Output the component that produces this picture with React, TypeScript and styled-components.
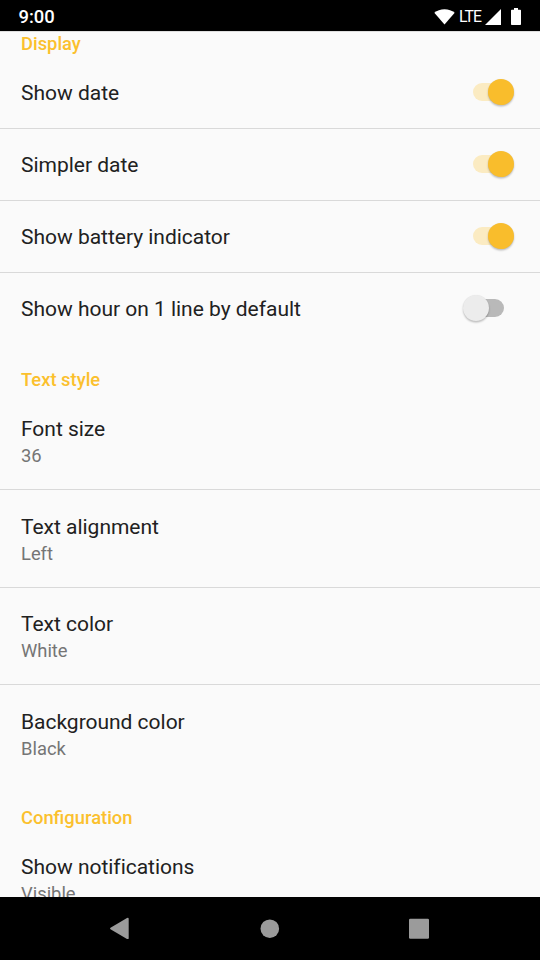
import React from "react";
import styled, { createGlobalStyle } from "styled-components";

const GlobalStyle = createGlobalStyle`
  *, *::before, *::after { box-sizing: border-box; }
  html, body { margin: 0; padding: 0; background: #000; }
  body { font-family: Roboto, sans-serif; overflow: hidden; }
`;

const Screen = styled.div`
  display: flex;
  flex-direction: column;
  width: 540px;
  height: 960px;
  background: #fafafa;
  overflow: hidden;
`;

const StatusBar = styled.header`
  flex: none;
  display: flex;
  align-items: center;
  justify-content: space-between;
  height: 31px;
  padding: 2px 19px 0 18.5px;
  background: #000;
  color: #fff;
`;

const Clock = styled.span`
  font-size: 18.4px;
  font-weight: 500;
  line-height: 22px;
`;

const StatusIcons = styled.div`
  display: flex;
  align-items: center;
  height: 20px;
  svg { display: block; fill: #fff; }
`;

const Network = styled.span`
  width: 24px;
  margin: 0 2px 0 4px;
  font-size: 15.75px;
  font-weight: 400;
  line-height: 20px;
  letter-spacing: -0.9px;
`;

const BatteryIcon = styled.svg`
  margin-left: 10px;
`;

const Viewport = styled.main`
  flex: 1;
  min-height: 0;
  overflow: hidden;
  background: #fafafa;
  border-top: 1px solid #dedede;
`;

const SettingsList = styled.div`
  margin-top: -23.5px;
`;

const Category = styled.h2`
  height: 48px;
  margin: 0;
  padding: 24px 21px 0;
  color: #fbc02d;
  font-size: 18.375px;
  font-weight: 500;
  line-height: 22px;
`;

const Row = styled.div<{ $tall?: boolean; $divided?: boolean }>`
  display: flex;
  align-items: center;
  justify-content: space-between;
  height: ${(p) => (p.$tall ? 97.5 : 72)}px;
  padding: 0 21px;
  border-bottom: 1px solid ${(p) => (p.$divided ? "#d9d9d9" : "transparent")};
`;

const Labels = styled.div`
  display: flex;
  flex-direction: column;
  padding-top: 3px;
`;

const Title = styled.span`
  color: #212121;
  font-size: 21px;
  line-height: 25px;
  letter-spacing: -0.02px;
  white-space: nowrap;
`;

const Summary = styled.span`
  margin-top: 3px;
  color: #757575;
  font-size: 18.375px;
  line-height: 22px;
`;

const Track = styled.span<{ $on: boolean }>`
  display: flex;
  align-items: center;
  justify-content: ${(p) => (p.$on ? "flex-end" : "flex-start")};
  width: 31px;
  height: 18px;
  margin-right: 15px;
  border-radius: 9px;
  background: ${(p) => (p.$on ? "#fbebc2" : "#b9b9b9")};
`;

const Thumb = styled.span<{ $on: boolean }>`
  flex: none;
  width: 26px;
  height: 26px;
  margin: ${(p) => (p.$on ? "0 -10px 0 0" : "0 0 0 -10px")};
  border-radius: 50%;
  background: ${(p) => (p.$on ? "#f9bd2c" : "#ececec")};
  box-shadow: 0 1.5px 2px rgba(0, 0, 0, 0.24), 0 0 1px rgba(0, 0, 0, 0.08);
`;

const NavBar = styled.nav`
  flex: none;
  display: flex;
  align-items: center;
  justify-content: space-between;
  height: 63px;
  padding: 0 110px 0 107px;
  background: #000;
  svg { display: block; fill: #9b9b9b; }
`;

type Setting = { title: string; summary?: string; on?: boolean };

const sections: { name: string; items: Setting[] }[] = [
  {
    name: "Display",
    items: [
      { title: "Show date", on: true },
      { title: "Simpler date", on: true },
      { title: "Show battery indicator", on: true },
      { title: "Show hour on 1 line by default", on: false },
    ],
  },
  {
    name: "Text style",
    items: [
      { title: "Font size", summary: "36" },
      { title: "Text alignment", summary: "Left" },
      { title: "Text color", summary: "White" },
      { title: "Background color", summary: "Black" },
    ],
  },
  {
    name: "Configuration",
    items: [{ title: "Show notifications", summary: "Visible" }],
  },
];

export default function App() {
  return (
    <Screen>
      <GlobalStyle />
      <StatusBar>
        <Clock>9:00</Clock>
        <StatusIcons>
          <svg width="21" height="16" viewBox="0 0 21 16">
            <path d="M10.5 15.6 0.3 3.7C3 1.5 6.6 0.2 10.5 0.2S18 1.5 20.7 3.7Z" />
          </svg>
          <Network>LTE</Network>
          <svg width="16" height="16" viewBox="0 0 16 16">
            <path d="M0 16 16 0V16Z" />
          </svg>
          <BatteryIcon width="10" height="17" viewBox="0 0 10 17">
            <path d="M3 0H7V1.7H9.2Q10 1.7 10 2.5V16.2Q10 17 9.2 17H0.8Q0 17 0 16.2V2.5Q0 1.7 0.8 1.7H3Z" />
          </BatteryIcon>
        </StatusIcons>
      </StatusBar>
      <Viewport>
        <SettingsList>
          {sections.map((section) => (
            <section key={section.name}>
              <Category>{section.name}</Category>
              {section.items.map((item, i) => (
                <Row
                  key={item.title}
                  $tall={item.summary !== undefined}
                  $divided={i < section.items.length - 1}
                >
                  <Labels>
                    <Title>{item.title}</Title>
                    {item.summary && <Summary>{item.summary}</Summary>}
                  </Labels>
                  {item.on !== undefined && (
                    <Track $on={item.on}>
                      <Thumb $on={item.on} />
                    </Track>
                  )}
                </Row>
              ))}
            </section>
          ))}
        </SettingsList>
      </Viewport>
      <NavBar>
        <svg width="24" height="24" viewBox="0 0 24 24">
          <path d="M3.5 10.7 20 1Q21.7 0.3 21.7 2V20.9Q21.7 22.6 20 21.9L3.5 12.2Q2.5 11.4 3.5 10.7Z" />
        </svg>
        <svg width="20" height="20" viewBox="0 0 20 20">
          <circle cx="9.8" cy="9.7" r="9.3" />
        </svg>
        <svg width="22" height="22" viewBox="0 0 22 22">
          <rect x="1" y="0.8" width="20" height="20" rx="1.3" />
        </svg>
      </NavBar>
    </Screen>
  );
}
